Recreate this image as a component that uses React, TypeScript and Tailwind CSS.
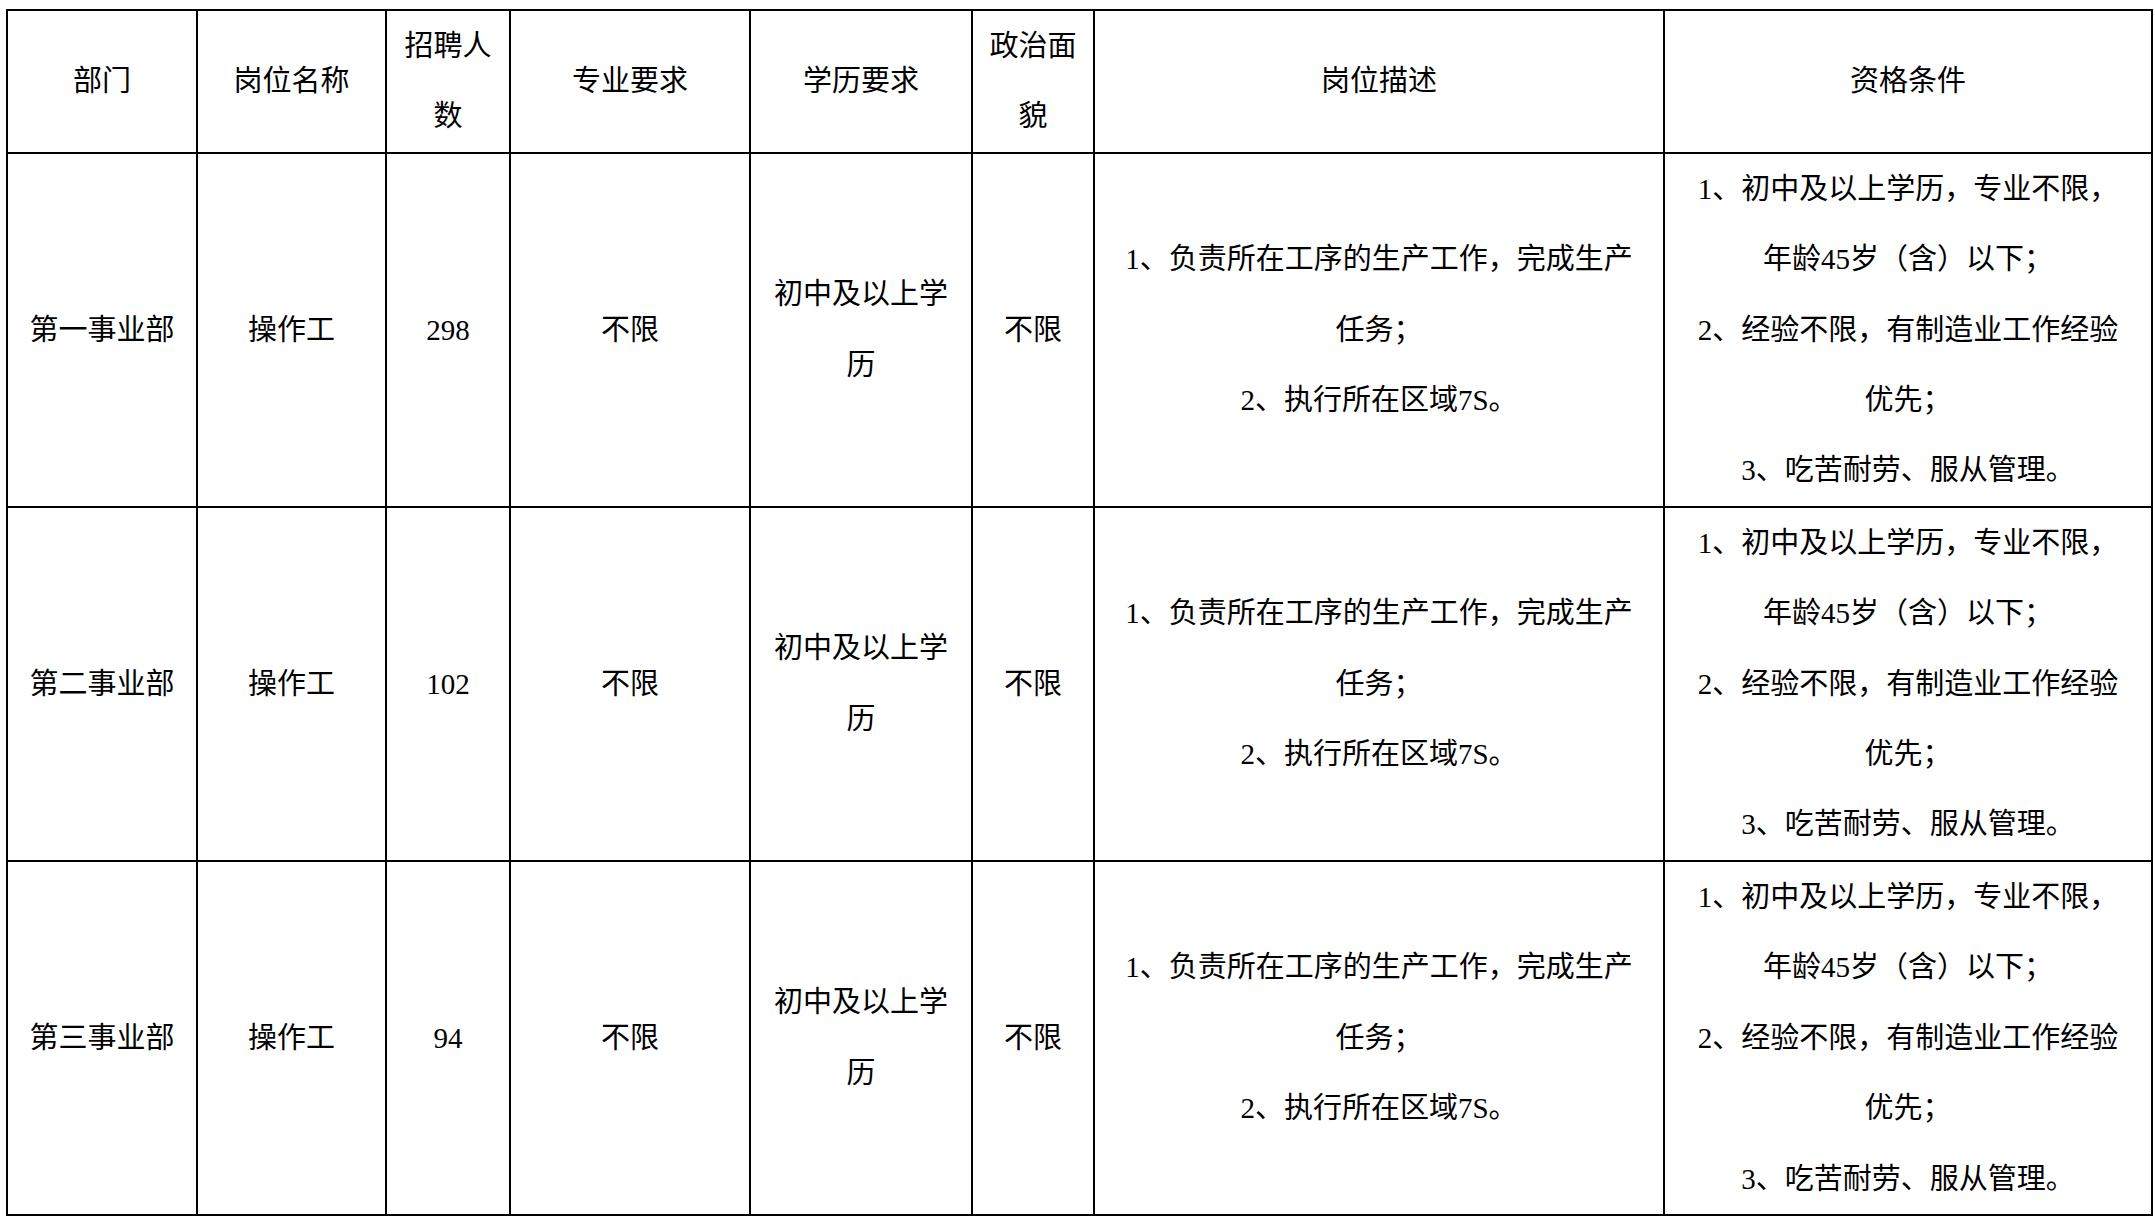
import React from 'react';

const colWidths = ['w-[190px]', 'w-[189px]', 'w-[124px]', 'w-[240px]', 'w-[222px]', 'w-[122px]', 'w-[570px]', 'w-[488px]'];

const header: string[][] = [
  ['部门'],
  ['岗位名称'],
  ['招聘人', '数'],
  ['专业要求'],
  ['学历要求'],
  ['政治面', '貌'],
  ['岗位描述'],
  ['资格条件'],
];

const duty = ['1、负责所在工序的生产工作，完成生产', '任务；', '2、执行所在区域7S。'];
const terms = [
  '1、初中及以上学历，专业不限，',
  '年龄45岁（含）以下；',
  '2、经验不限，有制造业工作经验',
  '优先；',
  '3、吃苦耐劳、服从管理。',
];

const jobs = [
  { dept: '第一事业部', count: '298' },
  { dept: '第二事业部', count: '102' },
  { dept: '第三事业部', count: '94' },
];

function Cell({ lines, col }: { lines: string[]; col: number }) {
  return (
    <div className={`${colWidths[col]} flex flex-col items-center justify-center text-center border-r-2 border-b-2 border-black`}>
      {lines.map((l, i) => (
        <div key={i} className="whitespace-nowrap">{l}</div>
      ))}
    </div>
  );
}

export default function App() {
  const rows: string[][][] = [
    header,
    ...jobs.map((j) => [[j.dept], ['操作工'], [j.count], ['不限'], ['初中及以上学', '历'], ['不限'], duty, terms]),
  ];

  return (
    <div className="min-h-screen bg-white pl-[6px] pt-[9px]">
      <div
        className="inline-grid grid-cols-[190px_189px_124px_240px_222px_122px_570px_488px] border-l-2 border-t-2 border-black text-black text-[29px] leading-[70.4px]"
        style={{ fontFamily: '"Liberation Serif", "Noto Sans CJK SC", serif' }}
      >
        {rows.map((row, r) =>
          row.map((lines, c) => <Cell key={`${r}-${c}`} lines={lines} col={c} />)
        )}
      </div>
    </div>
  );
}
